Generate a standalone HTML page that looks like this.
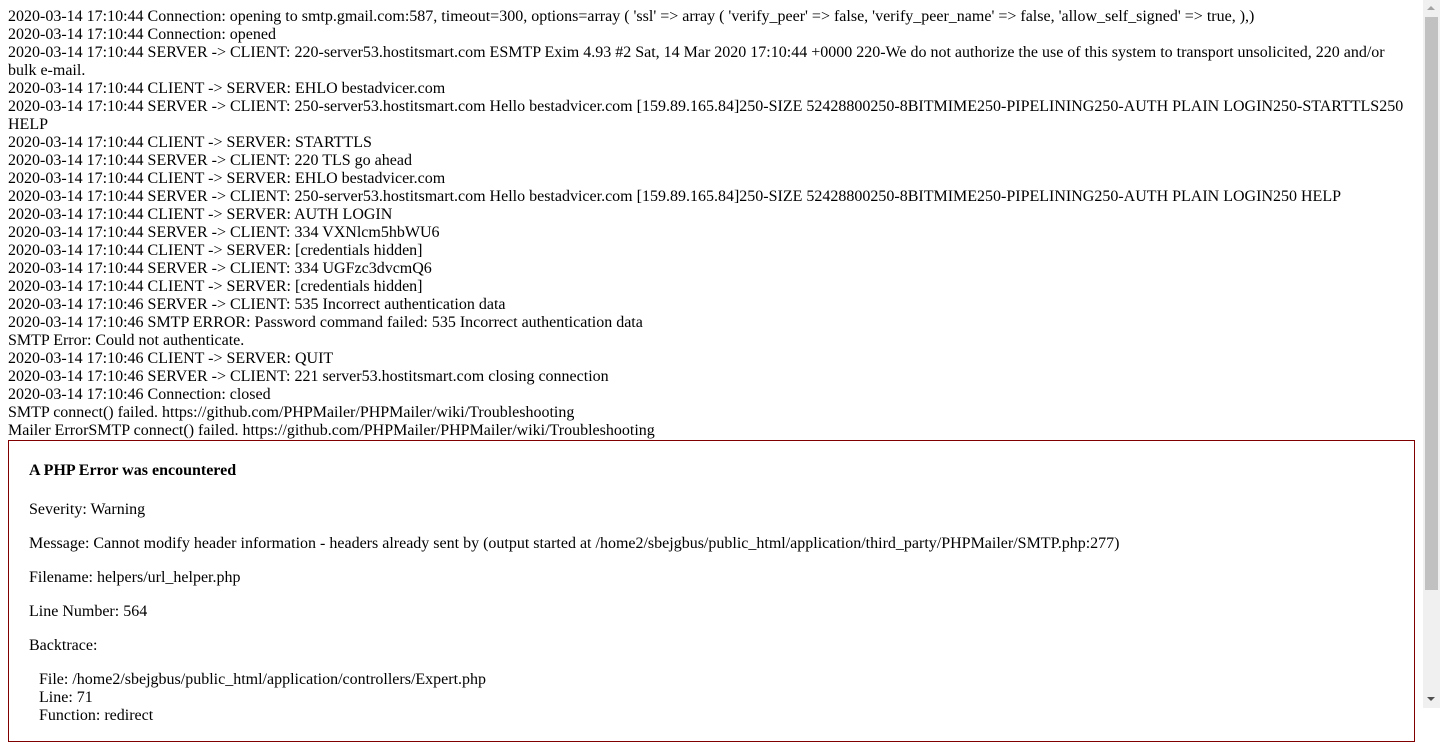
<!DOCTYPE html>
<html><head><style>
html,body{margin:0;padding:0;}
body{width:1423px;height:708px;overflow:hidden;font-family:"Liberation Serif",serif;font-size:16px;line-height:18px;color:#000;background:#fff;}
.wrap{padding:8px 8px 0 8px;}
.box{border:1px solid #800000;padding-left:20px;margin:0 0 10px 0;}
h4{font-size:16px;margin:21px 0;line-height:18px;}
p{margin:16px 0;}
.sb{position:absolute;left:1423px;top:0;width:17px;height:708px;background:#f0f0f0;}
.th{position:absolute;left:2px;top:17px;width:13px;height:573px;background:#c1c1c1;}
</style></head><body>
<div class="wrap">
2020-03-14 17:10:44 Connection: opening to smtp.gmail.com:587, timeout=300, options=array ( 'ssl' =&gt; array ( 'verify_peer' =&gt; false, 'verify_peer_name' =&gt; false, 'allow_self_signed' =&gt; true, ),)<br>
2020-03-14 17:10:44 Connection: opened<br>
2020-03-14 17:10:44 SERVER -&gt; CLIENT: 220-server53.hostitsmart.com ESMTP Exim 4.93 #2 Sat, 14 Mar 2020 17:10:44 +0000 220-We do not authorize the use of this system to transport unsolicited, 220 and/or bulk e-mail.<br>
2020-03-14 17:10:44 CLIENT -&gt; SERVER: EHLO bestadvicer.com<br>
2020-03-14 17:10:44 SERVER -&gt; CLIENT: 250-server53.hostitsmart.com Hello bestadvicer.com [159.89.165.84]250-SIZE 52428800250-8BITMIME250-PIPELINING250-AUTH PLAIN LOGIN250-STARTTLS250 HELP<br>
2020-03-14 17:10:44 CLIENT -&gt; SERVER: STARTTLS<br>
2020-03-14 17:10:44 SERVER -&gt; CLIENT: 220 TLS go ahead<br>
2020-03-14 17:10:44 CLIENT -&gt; SERVER: EHLO bestadvicer.com<br>
2020-03-14 17:10:44 SERVER -&gt; CLIENT: 250-server53.hostitsmart.com Hello bestadvicer.com [159.89.165.84]250-SIZE 52428800250-8BITMIME250-PIPELINING250-AUTH PLAIN LOGIN250 HELP<br>
2020-03-14 17:10:44 CLIENT -&gt; SERVER: AUTH LOGIN<br>
2020-03-14 17:10:44 SERVER -&gt; CLIENT: 334 VXNlcm5hbWU6<br>
2020-03-14 17:10:44 CLIENT -&gt; SERVER: [credentials hidden]<br>
2020-03-14 17:10:44 SERVER -&gt; CLIENT: 334 UGFzc3dvcmQ6<br>
2020-03-14 17:10:44 CLIENT -&gt; SERVER: [credentials hidden]<br>
2020-03-14 17:10:46 SERVER -&gt; CLIENT: 535 Incorrect authentication data<br>
2020-03-14 17:10:46 SMTP ERROR: Password command failed: 535 Incorrect authentication data<br>
SMTP Error: Could not authenticate.<br>
2020-03-14 17:10:46 CLIENT -&gt; SERVER: QUIT<br>
2020-03-14 17:10:46 SERVER -&gt; CLIENT: 221 server53.hostitsmart.com closing connection<br>
2020-03-14 17:10:46 Connection: closed<br>
SMTP connect() failed. https://github.com/PHPMailer/PHPMailer/wiki/Troubleshooting<br>
Mailer ErrorSMTP connect() failed. https://github.com/PHPMailer/PHPMailer/wiki/Troubleshooting
<div class="box">
<h4>A PHP Error was encountered</h4>
<p>Severity: Warning</p>
<p>Message: Cannot modify header information - headers already sent by (output started at /home2/sbejgbus/public_html/application/third_party/PHPMailer/SMTP.php:277)</p>
<p>Filename: helpers/url_helper.php</p>
<p>Line Number: 564</p>
<p>Backtrace:</p>
<p style="margin-left:10px">File: /home2/sbejgbus/public_html/application/controllers/Expert.php<br>Line: 71<br>Function: redirect</p>
</div>
</div>
<div class="sb"><div class="th"></div>
<div style="position:absolute;left:4px;top:6px;width:0;height:0;border-left:4px solid transparent;border-right:4px solid transparent;border-bottom:4px solid #a3a3a3;"></div>
<div style="position:absolute;left:4px;top:697px;width:0;height:0;border-left:4px solid transparent;border-right:4px solid transparent;border-top:4px solid #505050;"></div>
</div>
</body></html>
